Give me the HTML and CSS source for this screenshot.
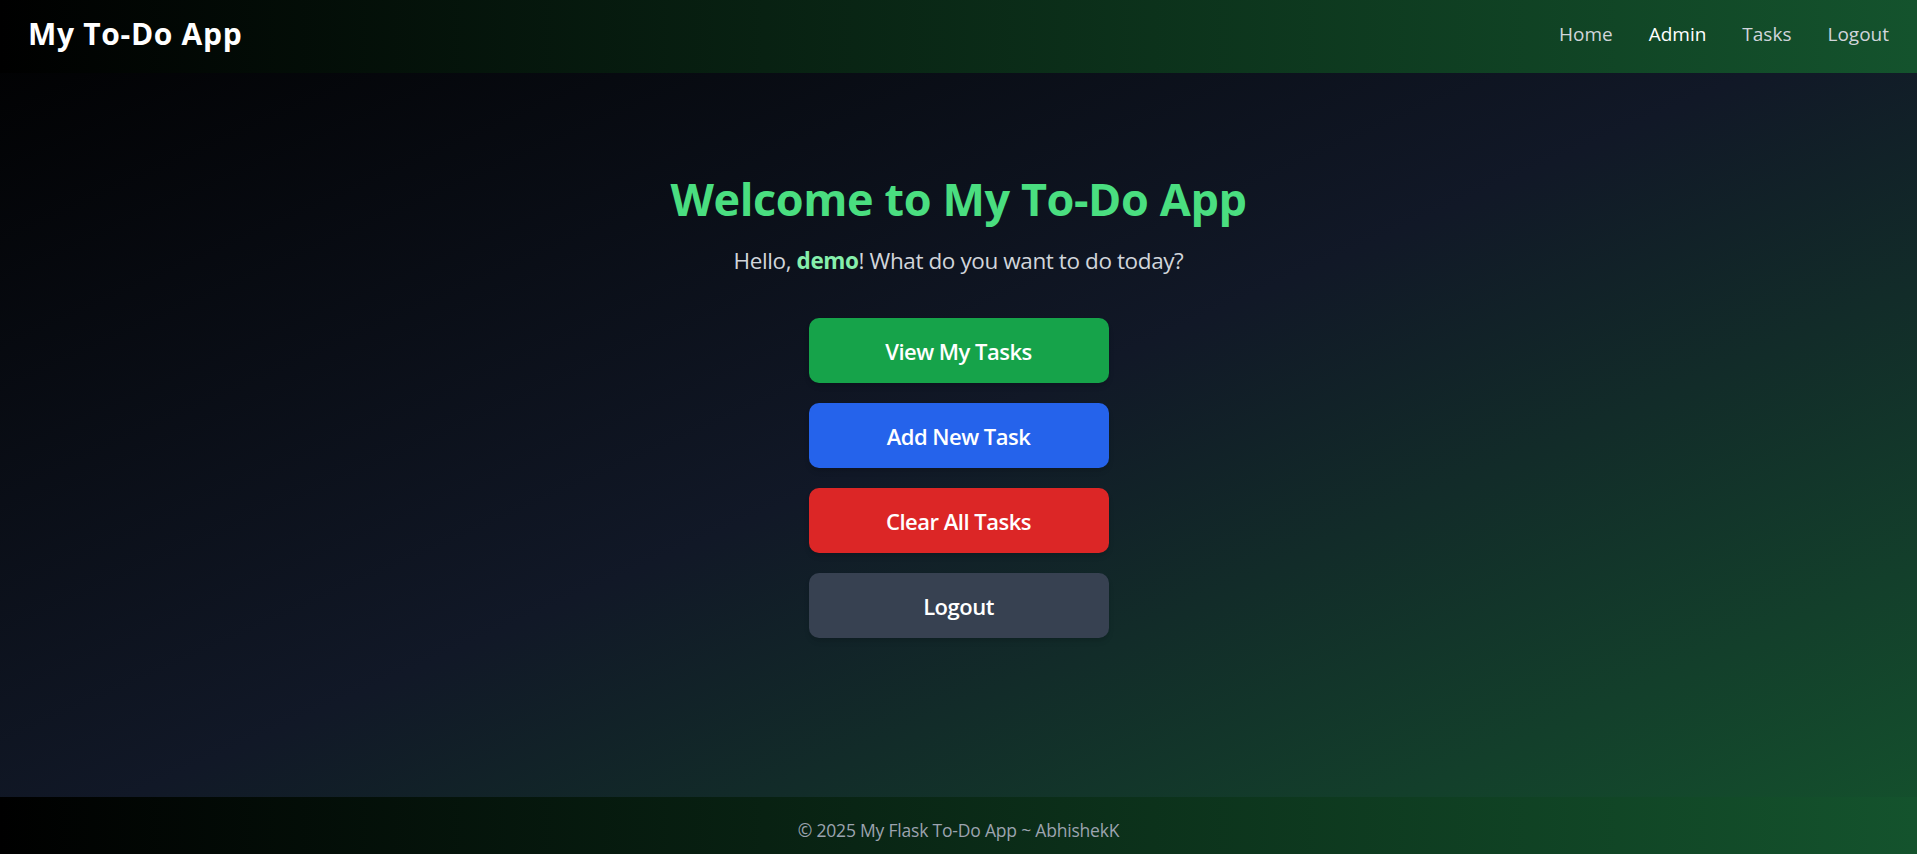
FILE: index.html
```html
<!DOCTYPE html>
<html lang="en">
<head>
<meta charset="utf-8">
<title>My To-Do App</title>
<link rel="stylesheet" href="styles.css">
</head>
<body>
  <nav class="navbar">
    <a class="brand" href="#">My To-Do App</a>
    <div class="nav-links">
      <a class="nav-link" href="#">Home</a>
      <a class="nav-link nav-link-active" href="#">Admin</a>
      <a class="nav-link" href="#">Tasks</a>
      <a class="nav-link" href="#">Logout</a>
    </div>
  </nav>

  <main class="main">
    <h1 class="welcome">Welcome to My To-Do App</h1>
    <p class="greeting">Hello, <strong class="username">demo</strong>! What do you want to do today?</p>
    <div class="actions">
      <a class="btn btn-green" href="#">View My Tasks</a>
      <a class="btn btn-blue" href="#">Add New Task</a>
      <a class="btn btn-red" href="#">Clear All Tasks</a>
      <a class="btn btn-gray" href="#">Logout</a>
    </div>
  </main>

  <footer class="footer">© 2025 My Flask To-Do App ~ AbhishekK</footer>
</body>
</html>
```

FILE: styles.css
```css
* {
  box-sizing: border-box;
}

html, body {
  margin: 0;
  padding: 0;
}

body {
  min-height: 100vh;
  display: flex;
  flex-direction: column;
  font-family: "Open Sans", "Noto Sans", sans-serif;
  color: #ffffff;
  background: linear-gradient(to bottom right, #000000 0%, #111827 50%, #14532d 100%);
}

a {
  text-decoration: none;
}

.navbar {
  height: 73px;
  padding: 0 28px 6px 28px;
  display: flex;
  align-items: center;
  justify-content: space-between;
  background: linear-gradient(to right, #000000, #14532d);
}

.brand {
  color: #ffffff;
  font-size: 30px;
  line-height: 40px;
  font-weight: 700;
  letter-spacing: 0.7px;
}

.nav-links {
  display: flex;
  gap: 36px;
}

.nav-link {
  color: #d1d5db;
  font-size: 19px;
  line-height: 30px;
}

.nav-link-active {
  color: #ffffff;
}

.main {
  flex: 1;
  display: flex;
  flex-direction: column;
  align-items: center;
  padding-top: 101px;
}

.welcome {
  margin: 0;
  font-size: 45px;
  line-height: 50px;
  font-weight: 700;
  letter-spacing: -0.4px;
  color: #4ade80;
}

.greeting {
  margin: 19px 0 0 0;
  font-size: 22.5px;
  line-height: 35px;
  letter-spacing: -0.4px;
  color: #d1d5db;
}

.username {
  color: #86efac;
  font-weight: 700;
}

.actions {
  margin-top: 40px;
  display: flex;
  flex-direction: column;
  gap: 20px;
}

.btn {
  width: 300px;
  height: 65px;
  border-radius: 10px;
  display: flex;
  align-items: center;
  justify-content: center;
  color: #ffffff;
  font-size: 22px;
  font-weight: 600;
  letter-spacing: -0.5px;
  box-shadow: 0 4px 6px -1px rgba(0, 0, 0, 0.1), 0 2px 4px -2px rgba(0, 0, 0, 0.1);
}

.btn-green { background: #16a34a; }
.btn-blue { background: #2563eb; }
.btn-red { background: #dc2626; }
.btn-gray { background: #374151; }

.footer {
  height: 57px;
  padding-top: 21px;
  text-align: center;
  font-size: 17.5px;
  line-height: 25px;
  letter-spacing: -0.2px;
  color: #9ca3af;
  background: linear-gradient(to right, #000000, #14532d);
}
```
